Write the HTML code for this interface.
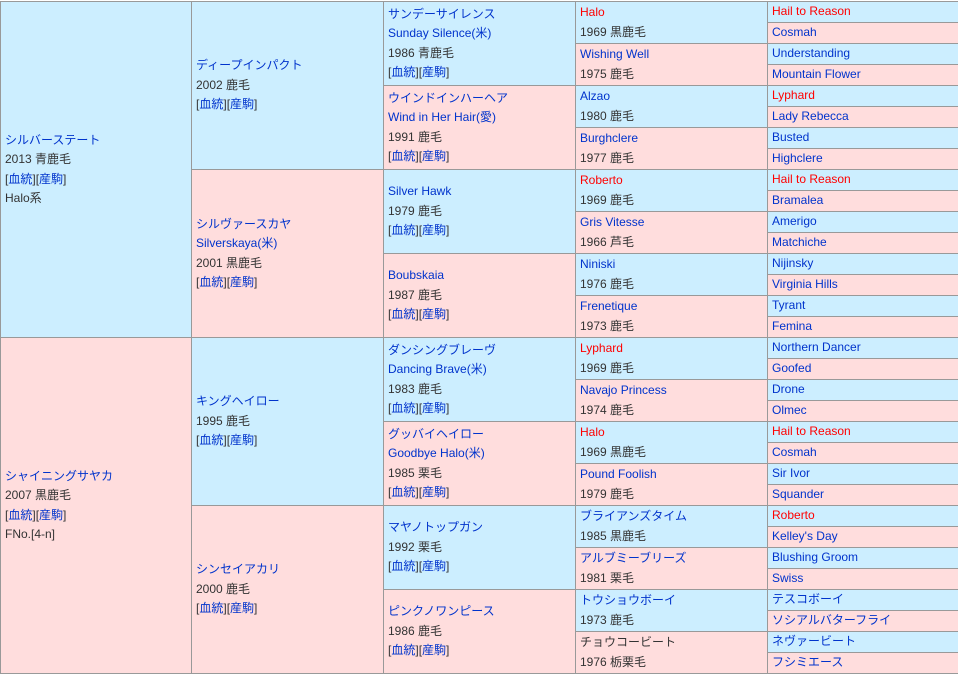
<!DOCTYPE html>
<html><head><meta charset="utf-8">
<style>
body{margin:0;width:958px;height:674px;background:#fff;overflow:hidden;font-family:"Liberation Sans","Noto Sans CJK JP",sans-serif;font-size:12px;color:#333}
.t{position:absolute;left:0;top:1px;width:958px;height:672px;border-bottom:1px solid #999;box-sizing:content-box}
.c{position:absolute;box-sizing:border-box;border-left:1px solid #999;border-top:1px solid #999;display:flex;flex-direction:column;justify-content:center;padding-left:4px;line-height:19.5px;white-space:nowrap;overflow:hidden}
.b{background:#cceeff}.p{background:#ffdddd}
a{color:#0033cc;text-decoration:none}
.r{color:#ff0000}
.g1{left:0;width:192px}.g2{left:191px;width:193px}.g3{left:383px;width:193px}.g4{left:575px;width:193px}.g5{left:767px;width:191px}
.k{color:#333}
</style></head><body>
<div class="t">
<!-- gen1 -->
<div class="c g1 b" style="top:0;height:336px"><a>シルバーステート</a><span>2013 青鹿毛</span><span>[<a>血統</a>][<a>産駒</a>]</span><span>Halo系</span></div>
<div class="c g1 p" style="top:336px;height:336px"><a>シャイニングサヤカ</a><span>2007 黒鹿毛</span><span>[<a>血統</a>][<a>産駒</a>]</span><span>FNo.[4-n]</span></div>
<!-- gen2 -->
<div class="c g2 b" style="top:0;height:168px"><a>ディープインパクト</a><span>2002 鹿毛</span><span>[<a>血統</a>][<a>産駒</a>]</span></div>
<div class="c g2 p" style="top:168px;height:168px"><a>シルヴァースカヤ</a><a>Silverskaya(米)</a><span>2001 黒鹿毛</span><span>[<a>血統</a>][<a>産駒</a>]</span></div>
<div class="c g2 b" style="top:336px;height:168px"><a>キングヘイロー</a><span>1995 鹿毛</span><span>[<a>血統</a>][<a>産駒</a>]</span></div>
<div class="c g2 p" style="top:504px;height:168px"><a>シンセイアカリ</a><span>2000 鹿毛</span><span>[<a>血統</a>][<a>産駒</a>]</span></div>
<!-- gen3 -->
<div class="c g3 b" style="top:0;height:84px"><a>サンデーサイレンス</a><a>Sunday Silence(米)</a><span>1986 青鹿毛</span><span>[<a>血統</a>][<a>産駒</a>]</span></div>
<div class="c g3 p" style="top:84px;height:84px"><a>ウインドインハーヘア</a><a>Wind in Her Hair(愛)</a><span>1991 鹿毛</span><span>[<a>血統</a>][<a>産駒</a>]</span></div>
<div class="c g3 b" style="top:168px;height:84px"><a>Silver Hawk</a><span>1979 鹿毛</span><span>[<a>血統</a>][<a>産駒</a>]</span></div>
<div class="c g3 p" style="top:252px;height:84px"><a>Boubskaia</a><span>1987 鹿毛</span><span>[<a>血統</a>][<a>産駒</a>]</span></div>
<div class="c g3 b" style="top:336px;height:84px"><a>ダンシングブレーヴ</a><a>Dancing Brave(米)</a><span>1983 鹿毛</span><span>[<a>血統</a>][<a>産駒</a>]</span></div>
<div class="c g3 p" style="top:420px;height:84px"><a>グッバイヘイロー</a><a>Goodbye Halo(米)</a><span>1985 栗毛</span><span>[<a>血統</a>][<a>産駒</a>]</span></div>
<div class="c g3 b" style="top:504px;height:84px"><a>マヤノトップガン</a><span>1992 栗毛</span><span>[<a>血統</a>][<a>産駒</a>]</span></div>
<div class="c g3 p" style="top:588px;height:84px"><a>ピンクノワンピース</a><span>1986 鹿毛</span><span>[<a>血統</a>][<a>産駒</a>]</span></div>
<!-- gen4 -->
<div class="c g4 b" style="top:0;height:42px"><a class="r">Halo</a><span>1969 黒鹿毛</span></div>
<div class="c g4 p" style="top:42px;height:42px"><a>Wishing Well</a><span>1975 鹿毛</span></div>
<div class="c g4 b" style="top:84px;height:42px"><a>Alzao</a><span>1980 鹿毛</span></div>
<div class="c g4 p" style="top:126px;height:42px"><a>Burghclere</a><span>1977 鹿毛</span></div>
<div class="c g4 b" style="top:168px;height:42px"><a class="r">Roberto</a><span>1969 鹿毛</span></div>
<div class="c g4 p" style="top:210px;height:42px"><a>Gris Vitesse</a><span>1966 芦毛</span></div>
<div class="c g4 b" style="top:252px;height:42px"><a>Niniski</a><span>1976 鹿毛</span></div>
<div class="c g4 p" style="top:294px;height:42px"><a>Frenetique</a><span>1973 鹿毛</span></div>
<div class="c g4 b" style="top:336px;height:42px"><a class="r">Lyphard</a><span>1969 鹿毛</span></div>
<div class="c g4 p" style="top:378px;height:42px"><a>Navajo Princess</a><span>1974 鹿毛</span></div>
<div class="c g4 b" style="top:420px;height:42px"><a class="r">Halo</a><span>1969 黒鹿毛</span></div>
<div class="c g4 p" style="top:462px;height:42px"><a>Pound Foolish</a><span>1979 鹿毛</span></div>
<div class="c g4 b" style="top:504px;height:42px"><a>ブライアンズタイム</a><span>1985 黒鹿毛</span></div>
<div class="c g4 p" style="top:546px;height:42px"><a>アルブミーブリーズ</a><span>1981 栗毛</span></div>
<div class="c g4 b" style="top:588px;height:42px"><a>トウショウボーイ</a><span>1973 鹿毛</span></div>
<div class="c g4 p" style="top:630px;height:42px"><span class="k">チョウコービート</span><span>1976 栃栗毛</span></div>
<!-- gen5 -->
<div class="c g5 b" style="top:0;height:21px"><a class="r">Hail to Reason</a></div>
<div class="c g5 p" style="top:21px;height:21px"><a>Cosmah</a></div>
<div class="c g5 b" style="top:42px;height:21px"><a>Understanding</a></div>
<div class="c g5 p" style="top:63px;height:21px"><a>Mountain Flower</a></div>
<div class="c g5 b" style="top:84px;height:21px"><a class="r">Lyphard</a></div>
<div class="c g5 p" style="top:105px;height:21px"><a>Lady Rebecca</a></div>
<div class="c g5 b" style="top:126px;height:21px"><a>Busted</a></div>
<div class="c g5 p" style="top:147px;height:21px"><a>Highclere</a></div>
<div class="c g5 b" style="top:168px;height:21px"><a class="r">Hail to Reason</a></div>
<div class="c g5 p" style="top:189px;height:21px"><a>Bramalea</a></div>
<div class="c g5 b" style="top:210px;height:21px"><a>Amerigo</a></div>
<div class="c g5 p" style="top:231px;height:21px"><a>Matchiche</a></div>
<div class="c g5 b" style="top:252px;height:21px"><a>Nijinsky</a></div>
<div class="c g5 p" style="top:273px;height:21px"><a>Virginia Hills</a></div>
<div class="c g5 b" style="top:294px;height:21px"><a>Tyrant</a></div>
<div class="c g5 p" style="top:315px;height:21px"><a>Femina</a></div>
<div class="c g5 b" style="top:336px;height:21px"><a>Northern Dancer</a></div>
<div class="c g5 p" style="top:357px;height:21px"><a>Goofed</a></div>
<div class="c g5 b" style="top:378px;height:21px"><a>Drone</a></div>
<div class="c g5 p" style="top:399px;height:21px"><a>Olmec</a></div>
<div class="c g5 b" style="top:420px;height:21px"><a class="r">Hail to Reason</a></div>
<div class="c g5 p" style="top:441px;height:21px"><a>Cosmah</a></div>
<div class="c g5 b" style="top:462px;height:21px"><a>Sir Ivor</a></div>
<div class="c g5 p" style="top:483px;height:21px"><a>Squander</a></div>
<div class="c g5 b" style="top:504px;height:21px"><a class="r">Roberto</a></div>
<div class="c g5 p" style="top:525px;height:21px"><a>Kelley's Day</a></div>
<div class="c g5 b" style="top:546px;height:21px"><a>Blushing Groom</a></div>
<div class="c g5 p" style="top:567px;height:21px"><a>Swiss</a></div>
<div class="c g5 b" style="top:588px;height:21px"><a>テスコボーイ</a></div>
<div class="c g5 p" style="top:609px;height:21px"><a>ソシアルバターフライ</a></div>
<div class="c g5 b" style="top:630px;height:21px"><a>ネヴァービート</a></div>
<div class="c g5 p" style="top:651px;height:21px"><a>フシミエース</a></div>
</div>
</body></html>
